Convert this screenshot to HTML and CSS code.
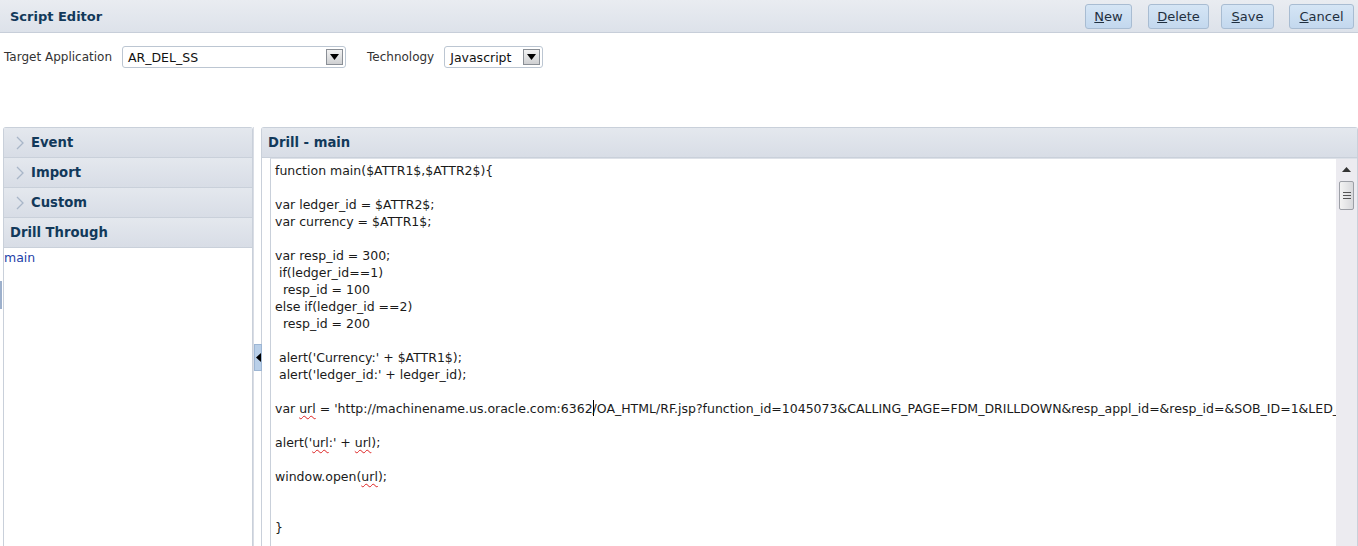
FILE: index.html
```html
<!DOCTYPE html>
<html>
<head>
<meta charset="utf-8">
<link rel="stylesheet" href="styles.css">
</head>
<body>
<div class="page">
  <div class="topbar">
    <div class="title">Script Editor</div>
    <div class="buttons">
      <button class="btn b-new"><u>N</u>ew</button>
      <button class="btn b-del"><u>D</u>elete</button>
      <button class="btn b-save"><u>S</u>ave</button>
      <button class="btn b-can"><u>C</u>ancel</button>
    </div>
  </div>
  <div class="form">
    <span class="label">Target Application</span>
    <div class="select sel-app"><span class="val">AR_DEL_SS</span><span class="arrow"><svg width="9" height="6" viewBox="0 0 9 6"><path d="M0 0H9L4.5 6Z" fill="#000"/></svg></span></div>
    <span class="label tech">Technology</span>
    <div class="select sel-tech"><span class="val">Javascript</span><span class="arrow"><svg width="9" height="6" viewBox="0 0 9 6"><path d="M0 0H9L4.5 6Z" fill="#000"/></svg></span></div>
  </div>
  <div class="main">
    <div class="edge-mark"></div>
    <div class="left">
      <div class="acc"><svg class="chev" width="8" height="14" viewBox="0 0 8 14"><path d="M1 1L7 7L1 13" fill="none" stroke="#a9b6c8" stroke-width="1.3"/></svg>Event</div>
      <div class="acc"><svg class="chev" width="8" height="14" viewBox="0 0 8 14"><path d="M1 1L7 7L1 13" fill="none" stroke="#a9b6c8" stroke-width="1.3"/></svg>Import</div>
      <div class="acc"><svg class="chev" width="8" height="14" viewBox="0 0 8 14"><path d="M1 1L7 7L1 13" fill="none" stroke="#a9b6c8" stroke-width="1.3"/></svg>Custom</div>
      <div class="acc open">Drill Through</div>
      <div class="list"><div class="item">main</div></div>
    </div>
    <div class="splitter"><div class="handle"><svg width="5" height="9" viewBox="0 0 5 9"><path d="M5 0V9L0 4.5Z" fill="#000"/></svg></div></div>
    <div class="right">
      <div class="phead">Drill - main</div>
      <div class="editor">
<pre class="code">function main($ATTR1$,$ATTR2$){

var ledger_id = $ATTR2$;
var currency = $ATTR1$;

var resp_id = 300;
 if(ledger_id==1)
  resp_id = 100
else if(ledger_id ==2)
  resp_id = 200

 alert('Currency:' + $ATTR1$);
 alert('ledger_id:' + ledger_id);

var <span class="sp">url</span> = 'http://machinename.us.oracle.com:6362<span class="caret"></span>/OA_HTML/RF.jsp?function_id=1045073&amp;CALLING_PAGE=FDM_DRILLDOWN&amp;resp_appl_id=&amp;resp_id=&amp;SOB_ID=1&amp;LED_ID=$ATTR2$';

alert('<span class="sp">url</span>:' + <span class="sp">url</span>);

window.open(<span class="sp">url</span>);


}</pre>
        <div class="vscroll">
          <div class="up"><svg width="9" height="5" viewBox="0 0 9 5"><path d="M0 5H9L4.5 0Z" fill="#333"/></svg></div>
          <div class="thumb"><i></i><i></i><i></i></div>
        </div>
      </div>
    </div>
  </div>
</div>
</body>
</html>
```
FILE: styles.css
```css
html, body { margin: 0; padding: 0; }
body { background: #fff; font-family: Tahoma, "DejaVu Sans", "Liberation Sans", sans-serif; color: #222; width: 1358px; height: 546px; overflow: hidden; }
.page { display: flex; flex-direction: column; height: 546px; }
.topbar { display: flex; align-items: center; justify-content: space-between; background: linear-gradient(#e9ecf1, #dde2ea); border-bottom: 1px solid #c7ced9; padding: 0 4px 0 10px; box-sizing: border-box; height: 33px; }
.title { font-weight: bold; font-size: 13px; color: #12395a; }
.buttons { display: flex; }
.btn { font-family: inherit; font-size: 13px; color: #1f2f40; background: linear-gradient(#d5e5f5, #c3d8ee); border: 1px solid #a8bcd2; border-radius: 3px; height: 25px; padding: 0; cursor: default; }
.b-new { width: 47px; }
.b-del { width: 61px; margin-left: 16px; }
.b-save { width: 53px; margin-left: 12px; }
.b-can { width: 65px; margin-left: 15px; }
.form { display: flex; padding: 13px 0 0 4px; box-sizing: border-box; height: 49px; align-items: flex-start; }
.label { font-size: 12px; color: #333; line-height: 22px; margin-right: 10px; }
.label.tech { margin-left: 21px; margin-right: 10px; }
.select { height: 22px; box-sizing: border-box; border: 1px solid #bcc6d2; border-radius: 3px; display: flex; align-items: center; justify-content: space-between; padding: 0 2px 0 5px; background: #fff; }
.sel-app { width: 224px; }
.sel-tech { width: 99px; }
.select .val { font-size: 12.5px; color: #111; }
.arrow { width: 17px; height: 16px; box-sizing: border-box; border: 1px solid #8a8f96; background: linear-gradient(#f2f2f2, #cfd0d2); display: flex; align-items: center; justify-content: center; }
.main { flex: 1; display: flex; margin-top: 45px; position: relative; min-height: 0; }
.edge-mark { position: absolute; left: 0; top: 154px; width: 2px; height: 28px; background: #9db0cc; }
.left { width: 250px; margin-left: 3px; border: 1px solid #c9d0da; border-bottom: none; border-radius: 3px 3px 0 0; box-sizing: border-box; display: flex; flex-direction: column; }
.acc { height: 30px; box-sizing: border-box; display: flex; align-items: center; font-weight: bold; font-size: 13.2px; color: #12395a; background: linear-gradient(#e4e8ee, #d8dde6); border-bottom: 1px solid #c9d0da; padding-left: 12px; }
.acc .chev { margin-right: 7px; }
.acc.open { padding-left: 6px; }
.list { flex: 1; }
.item { font-size: 12.5px; color: #1d3fa8; padding: 2px 0 0 0; line-height: 15px; }
.splitter { width: 8px; position: relative; border-left: 1px solid #d9dde5; box-sizing: border-box; }
.handle { position: absolute; left: 0; top: 217px; width: 8px; height: 27px; background: #b9cfe8; border: 1px solid #9db6d4; box-sizing: border-box; display: flex; align-items: center; justify-content: center; }
.right { flex: 1; border: 1px solid #c9d0da; border-bottom: none; border-radius: 3px 3px 0 0; display: flex; flex-direction: column; min-width: 0; }
.phead { height: 30px; flex: none; box-sizing: border-box; display: flex; align-items: center; font-weight: bold; font-size: 13.2px; color: #12395a; background: linear-gradient(#e4e8ee, #d8dde6); border-bottom: 1px solid #c9d0da; padding-left: 6px; }
.editor { flex: 1; display: flex; margin-left: 8px; border-left: 1px solid #c9d0da; border-top: 1px solid #dde1e8; min-height: 0; }
.code { flex: 1; margin: 0; padding: 3px 0 0 4px; font-family: Tahoma, "DejaVu Sans", "Liberation Sans", sans-serif; font-size: 12.5px; line-height: 17px; color: #1a1a1a; white-space: pre; overflow: hidden; min-width: 0; }
.sp { text-decoration: underline wavy #d22; text-decoration-thickness: 1px; text-underline-offset: 2px; }
.caret { display: inline-block; width: 1px; height: 16px; background: #000; vertical-align: -3px; margin-right: -1px; }
.vscroll { width: 21px; flex: none; background: #ecebf0; display: flex; flex-direction: column; align-items: center; }
.up { height: 20px; width: 100%; display: flex; align-items: center; justify-content: center; }
.thumb { width: 15px; height: 29px; margin-top: 2px; box-sizing: border-box; border: 1px solid #9c9fa6; border-radius: 2px; background: linear-gradient(90deg, #f3f3f3, #d8d9dc); display: flex; flex-direction: column; align-items: center; justify-content: center; gap: 2px; }
.thumb i { display: block; width: 8px; height: 1px; background: #555; }
```
